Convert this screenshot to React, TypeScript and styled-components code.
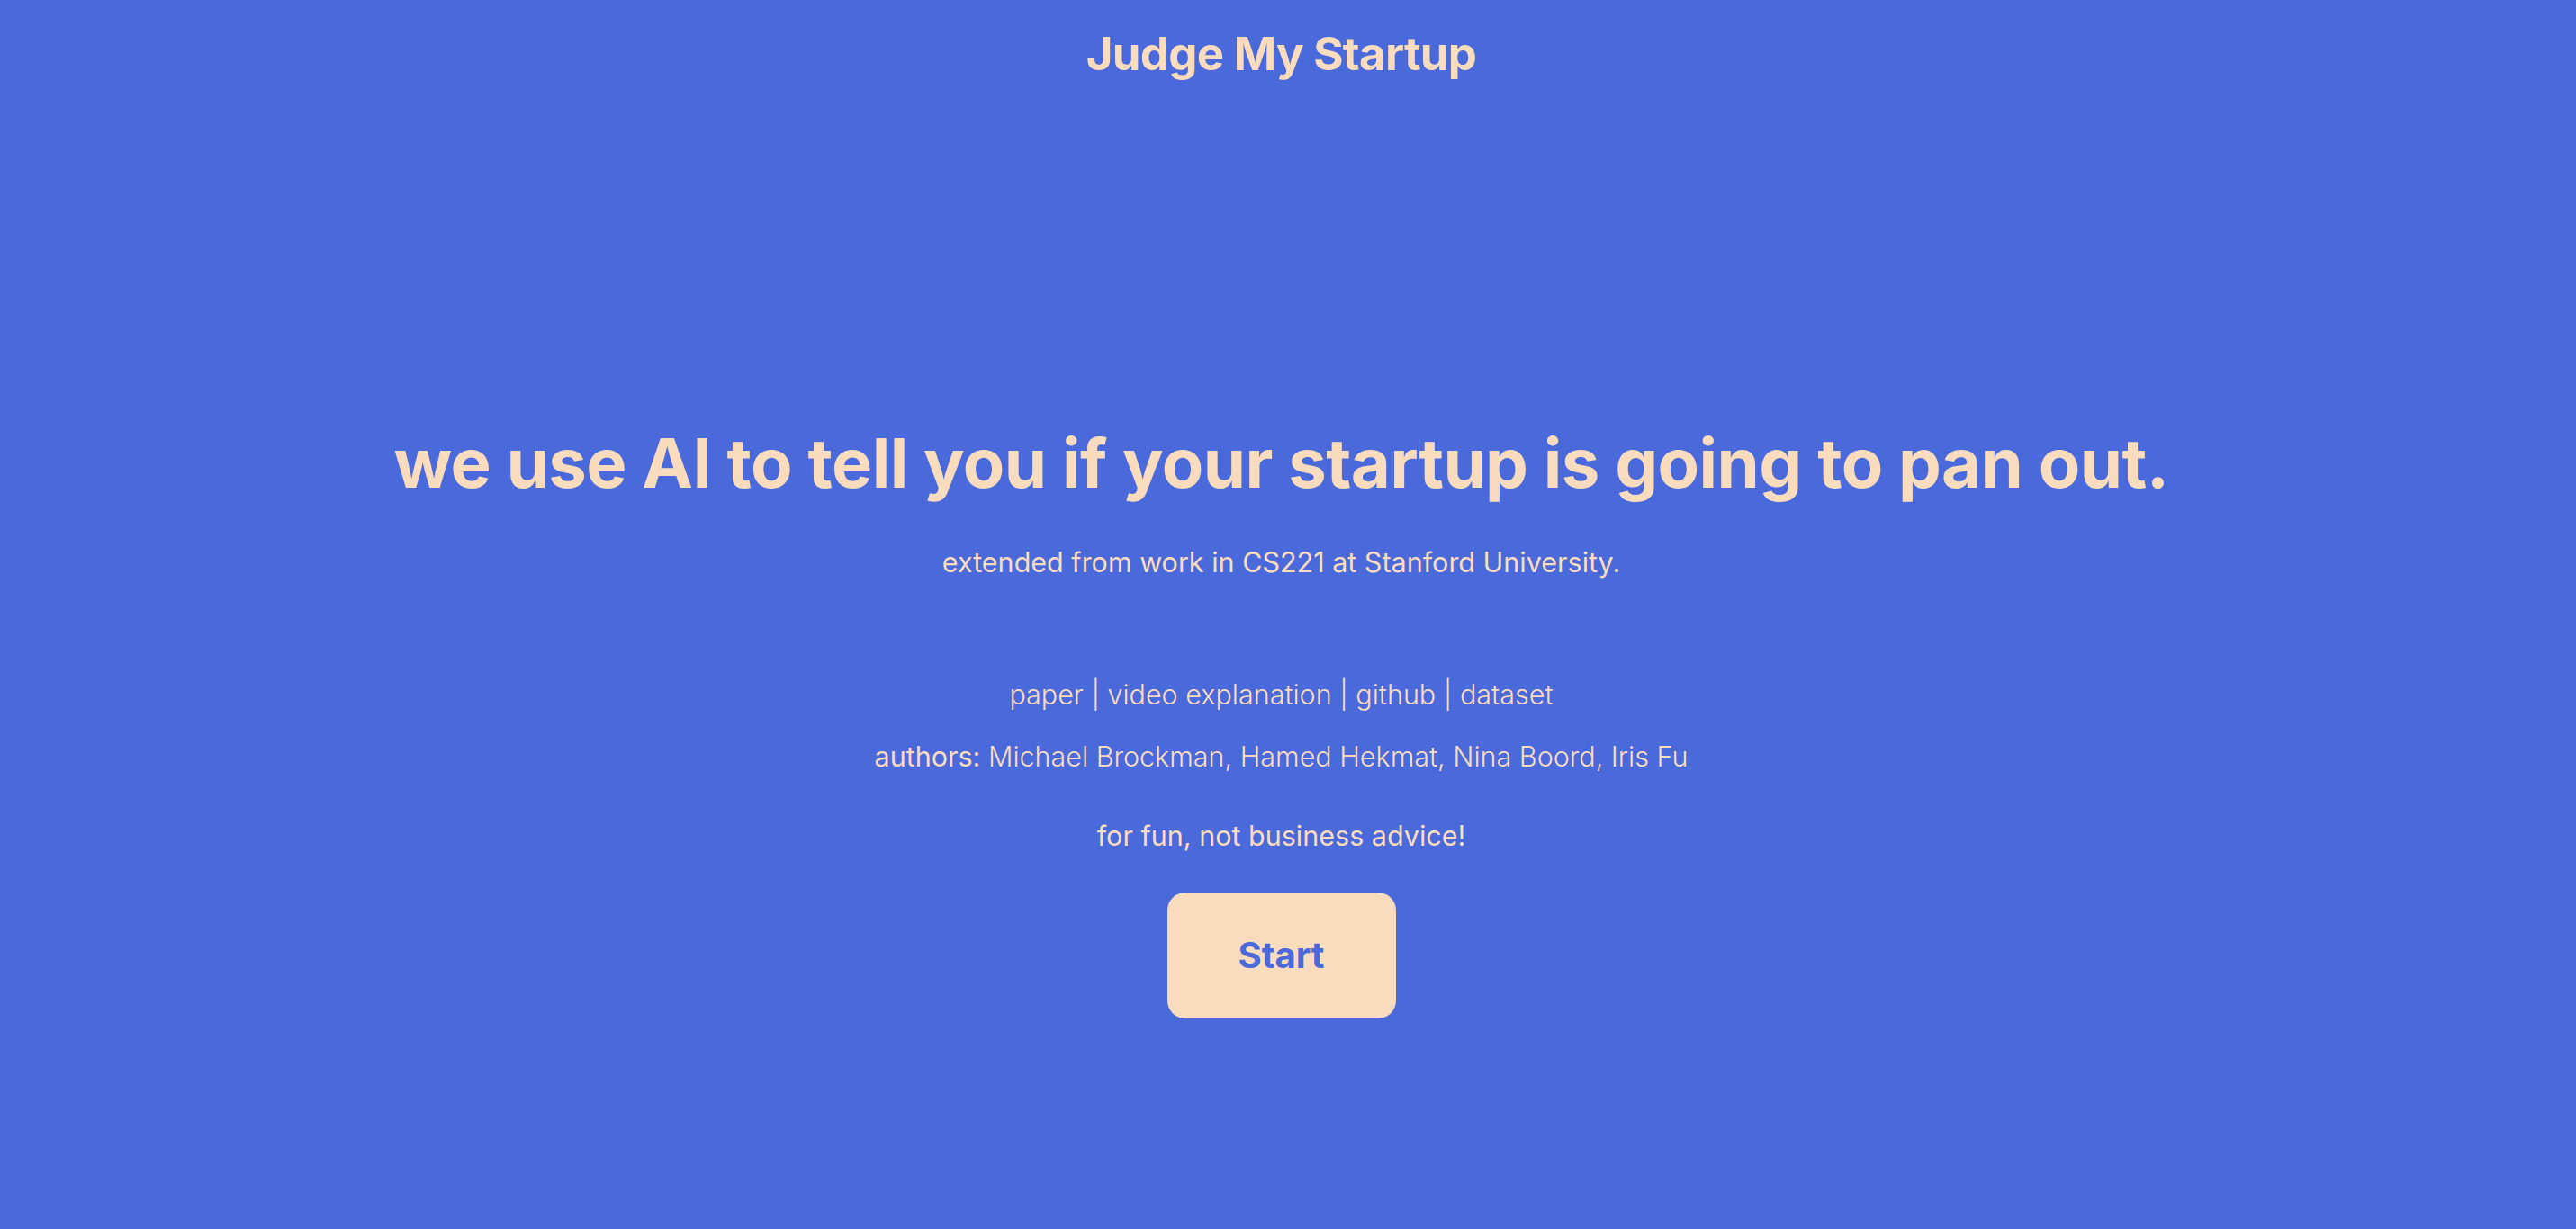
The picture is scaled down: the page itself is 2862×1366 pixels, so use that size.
import React from "react";
import styled, { createGlobalStyle } from "styled-components";

const GlobalStyle = createGlobalStyle`
  html, body {
    margin: 0;
    padding: 0;
    background: #4a69db;
    overflow: hidden;
  }
  body {
    font-family: Inter, "Noto Sans", "Liberation Sans", sans-serif;
    color: #f9dcbe;
  }
`;

const Page = styled.div`
  min-height: 100vh;
  background: #4a69db;
  display: flex;
  flex-direction: column;
  align-items: center;
  padding: 29px 15px 0 0;
  box-sizing: border-box;
`;

const Brand = styled.h1`
  margin: 0;
  font-size: 51px;
  line-height: 1.2;
  font-weight: 700;
  letter-spacing: -0.75px;
`;

const Hero = styled.main`
  display: flex;
  flex-direction: column;
  align-items: center;
  margin-top: 378.5px;
`;

const Headline = styled.h2`
  margin: 0;
  font-size: 76px;
  line-height: 1.2;
  font-weight: 700;
  letter-spacing: -0.6px;
`;

const Line = styled.p<{ $weight?: number; $gap: number }>`
  margin: ${(p) => p.$gap}px 0 0;
  font-size: 30.5px;
  line-height: 1.2;
  font-weight: ${(p) => p.$weight ?? 400};
`;

const Link = styled.a`
  color: inherit;
  text-decoration: none;
  font-weight: 300;
`;

const Label = styled.span`
  font-weight: 400;
`;

const StartButton = styled.button`
  margin-top: 44.8px;
  width: 254px;
  height: 140px;
  border: none;
  border-radius: 20px;
  background: #f9dcbe;
  color: #4a69db;
  font-family: inherit;
  font-size: 40px;
  font-weight: 700;
  cursor: pointer;
`;

export default function App() {
  return (
    <>
      <GlobalStyle />
      <Page>
        <Brand>Judge My Startup</Brand>
        <Hero>
          <Headline>we use AI to tell you if your startup is going to pan out.</Headline>
          <Line $gap={46.7}>extended from work in CS221 at Stanford University.</Line>
          <Line $gap={110.4} $weight={300}>
            <Link href="#">paper</Link> | <Link href="#">video explanation</Link> |{" "}
            <Link href="#">github</Link> | <Link href="#">dataset</Link>
          </Line>
          <Line $gap={32.4} $weight={300}>
            <Label>authors:</Label> Michael Brockman, Hamed Hekmat, Nina Boord, Iris Fu
          </Line>
          <Line $gap={51.4}>for fun, not business advice!</Line>
          <StartButton>Start</StartButton>
        </Hero>
      </Page>
    </>
  );
}
